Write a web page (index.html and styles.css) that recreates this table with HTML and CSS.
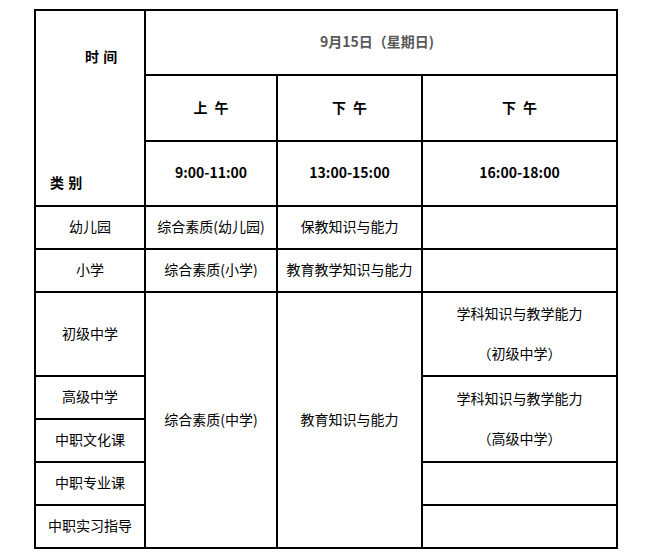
FILE: index.html
```html
<!DOCTYPE html>
<html lang="zh-CN">
<head>
<meta charset="utf-8">
<title>考试时间安排</title>
<link rel="stylesheet" href="styles.css">
</head>
<body>
<table class="schedule">
  <colgroup>
    <col class="c1"><col class="c2"><col class="c3"><col class="c4">
  </colgroup>
  <tr class="h1">
    <td rowspan="3" class="corner">
      <div class="corner-inner">
        <span class="corner-time">时 间</span>
        <span class="corner-cat">类 别</span>
      </div>
    </td>
    <td colspan="3" class="date">9月15日（星期日)</td>
  </tr>
  <tr class="h2">
    <td class="bold wide">上 午</td>
    <td class="bold wide">下 午</td>
    <td class="bold wide">下 午</td>
  </tr>
  <tr class="h3">
    <td class="bold">9:00-11:00</td>
    <td class="bold">13:00-15:00</td>
    <td class="bold">16:00-18:00</td>
  </tr>
  <tr class="r">
    <td>幼儿园</td>
    <td>综合素质(幼儿园)</td>
    <td>保教知识与能力</td>
    <td></td>
  </tr>
  <tr class="r">
    <td>小学</td>
    <td>综合素质(小学)</td>
    <td>教育教学知识与能力</td>
    <td></td>
  </tr>
  <tr class="r2">
    <td>初级中学</td>
    <td rowspan="6">综合素质(中学)</td>
    <td rowspan="6">教育知识与能力</td>
    <td class="two">学科知识与教学能力<br>（初级中学）</td>
  </tr>
  <tr class="r">
    <td>高级中学</td>
    <td rowspan="2" class="two">学科知识与教学能力<br>（高级中学）</td>
  </tr>
  <tr class="r">
    <td>中职文化课</td>
  </tr>
  <tr class="r">
    <td>中职专业课</td>
    <td></td>
  </tr>
  <tr class="r">
    <td>中职实习指导</td>
    <td></td>
  </tr>
</table>
</body>
</html>
```

FILE: styles.css
```css
html, body {
  margin: 0;
  padding: 0;
  background: #ffffff;
}

body {
  font-family: "Noto Sans CJK SC", "Noto Sans", sans-serif;
  font-size: 14px;
  color: #000000;
}

.schedule {
  margin: 9px 0 0 34px;
  border-collapse: collapse;
  table-layout: fixed;
  width: 582px;
}

.c1 { width: 110px; }
.c2 { width: 132px; }
.c3 { width: 145px; }
.c4 { width: 195px; }

.schedule td {
  border: 2px solid #000000;
  padding: 0 0 3px 0;
  text-align: center;
  vertical-align: middle;
  line-height: 20px;
}

.h1 td { height: 60px; }
.h2 td { height: 61px; }
.h3 td { height: 60px; }
.r td { height: 38px; }
.r2 td { height: 79px; }

.schedule td.corner {
  vertical-align: top;
  text-align: left;
  padding: 0;
}

.corner-inner {
  display: flex;
  flex-direction: column;
  justify-content: space-between;
  height: 192px;
  box-sizing: border-box;
  padding: 35px 0 11px 0;
  font-weight: bold;
}

.corner-time { padding-left: 49px; word-spacing: 1px; }
.corner-cat { padding-left: 14px; word-spacing: 1px; }

.bold { font-weight: bold; }

.wide { word-spacing: 4px; }

.schedule td.date {
  font-weight: bold;
  color: #595959;
  padding-right: 8px;
}

.schedule td.two {
  line-height: 40px;
  padding-bottom: 2px;
}
```
